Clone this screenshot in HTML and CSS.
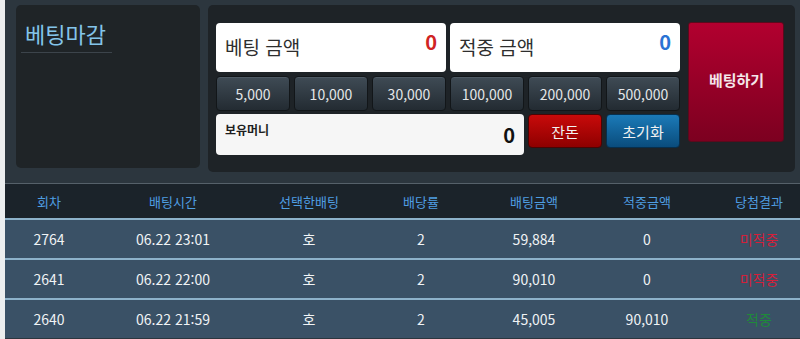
FILE: index.html
```html
<!DOCTYPE html>
<html lang="ko">
<head>
<meta charset="utf-8">
<link rel="stylesheet" href="styles.css">
</head>
<body>
<div class="wrap">
  <div class="top">
    <div class="status">
      <div class="status-title">베팅마감</div>
    </div>
    <div class="panel">
      <div class="controls">
        <div class="amount span3"><span class="amount-label">베팅 금액</span><span class="amount-val red">0</span></div>
        <div class="amount span3"><span class="amount-label">적중 금액</span><span class="amount-val blue">0</span></div>
        <button class="chip">5,000</button>
        <button class="chip">10,000</button>
        <button class="chip">30,000</button>
        <button class="chip">100,000</button>
        <button class="chip">200,000</button>
        <button class="chip">500,000</button>
        <div class="money span4"><span class="money-label">보유머니</span><span class="money-val">0</span></div>
        <button class="act act-red">잔돈</button>
        <button class="act act-blue">초기화</button>
      </div>
      <button class="bet">베팅하기</button>
    </div>
  </div>
  <div class="table">
    <div class="row head">
      <div>회차</div><div>배팅시간</div><div>선택한배팅</div><div>배당률</div><div>배팅금액</div><div>적중금액</div><div>당첨결과</div>
    </div>
    <div class="row">
      <div>2764</div><div>06.22 23:01</div><div>호</div><div>2</div><div>59,884</div><div>0</div><div class="lose">미적중</div>
    </div>
    <div class="row">
      <div>2641</div><div>06.22 22:00</div><div>호</div><div>2</div><div>90,010</div><div>0</div><div class="lose">미적중</div>
    </div>
    <div class="row">
      <div>2640</div><div>06.22 21:59</div><div>호</div><div>2</div><div>45,005</div><div>90,010</div><div class="win">적중</div>
    </div>
  </div>
</div>
</body>
</html>
```
FILE: styles.css
```css
* { box-sizing: border-box; }
html, body {
  margin: 0;
  padding: 0;
  background: #eceeef;
  overflow: hidden;
  font-family: "Noto Sans CJK KR", "Noto Sans", sans-serif;
}
.wrap {
  margin-left: 5px;
  width: 795px;
  height: 339px;
  background: #2c363e;
  overflow: hidden;
}
.top {
  display: flex;
  align-items: flex-start;
  gap: 8px;
  height: 184px;
  padding: 5px 5px 0 11px;
  border-bottom: 1px solid #56616a;
}
.status {
  width: 184px;
  height: 163px;
  background: #1f2427;
  border-radius: 5px;
  padding: 14px 0 0 5px;
}
.status-title {
  width: 91px;
  color: #84c4ea;
  font-size: 22px;
  line-height: 28px;
  padding-left: 4px;
  padding-bottom: 5px;
  border-bottom: 1px solid #3c444b;
}
.panel {
  width: 587px;
  height: 167px;
  background: #1e2327;
  border-radius: 5px;
  padding: 17px 0 0 8px;
  display: flex;
  align-items: flex-start;
  gap: 8px;
}
.controls {
  margin-top: 1px;
  width: 464px;
  display: grid;
  grid-template-columns: repeat(6, 74px);
  grid-template-rows: 49px 35px 40px;
  column-gap: 4px;
  row-gap: 4px;
}
.controls > :nth-child(n+9) { margin-top: -1px; }
.span3 { grid-column: span 3; }
.span4 { grid-column: span 4; }
.amount {
  background: #ffffff;
  border-radius: 4px;
  display: flex;
  justify-content: space-between;
  align-items: flex-start;
  padding: 0 9px;
}
.amount-label {
  color: #2e2e2e;
  font-size: 19px;
  line-height: 26px;
  margin-top: 11px;
}
.amount-val {
  font-size: 20px;
  font-weight: 700;
  line-height: 26px;
  margin-top: 6px;
}
.red { color: #d02424; }
.blue { color: #2a72d4; }
.chip {
  margin: 0;
  padding: 0;
  border: 1px solid #121619;
  border-radius: 4px;
  background: linear-gradient(#3f4b55, #232b32);
  color: #e4e6e8;
  font-family: inherit;
  font-size: 14px;
  box-shadow: inset 0 1px 0 #4e5a64;
}
.money {
  background: #f6f6f6;
  border-radius: 4px;
  display: flex;
  justify-content: space-between;
  align-items: flex-start;
  padding: 0 9px;
}
.money-label {
  font-size: 12px;
  font-weight: 700;
  color: #1e1e1e;
  line-height: 18px;
  margin-top: 7px;
}
.money-val {
  font-size: 20px;
  font-weight: 700;
  color: #111;
  line-height: 26px;
  margin-top: 8px;
}
.act {
  margin: 0;
  padding: 0;
  height: 34px;
  border-radius: 4px;
  font-family: inherit;
  font-size: 15px;
  color: #f2f2f2;
}
.act-red {
  background: linear-gradient(#c80a0a, #8e0000);
  border: 1px solid #4a0404;
}
.act-blue {
  background: linear-gradient(#1b7ab8, #0a4c7c);
  border: 1px solid #072f4d;
}
.bet {
  margin: 0;
  padding: 0 0 6px 1px;
  width: 96px;
  height: 120px;
  border: 1px solid #5a0a1c;
  border-radius: 3px;
  background: linear-gradient(#b2002f, #7c0020);
  color: #f4e6ea;
  font-family: inherit;
  font-size: 15px;
  font-weight: 700;
}
.table { width: 810px; }
.row {
  display: grid;
  grid-template-columns: 88px 160px 112px 112px 114px 112px 112px;
  height: 40px;
  background: #3a5166;
  border-top: 2px solid #8db2ca;
  color: #f0f3f5;
  font-size: 14px;
  align-items: center;
  text-align: center;
}
.row.head {
  height: 34px;
  border-top: 0;
  background: #1b232a;
  color: #4f9ee2;
  font-size: 13px;
}
.lose { color: #d4203a; }
.win { color: #1f8a3a; }
```
